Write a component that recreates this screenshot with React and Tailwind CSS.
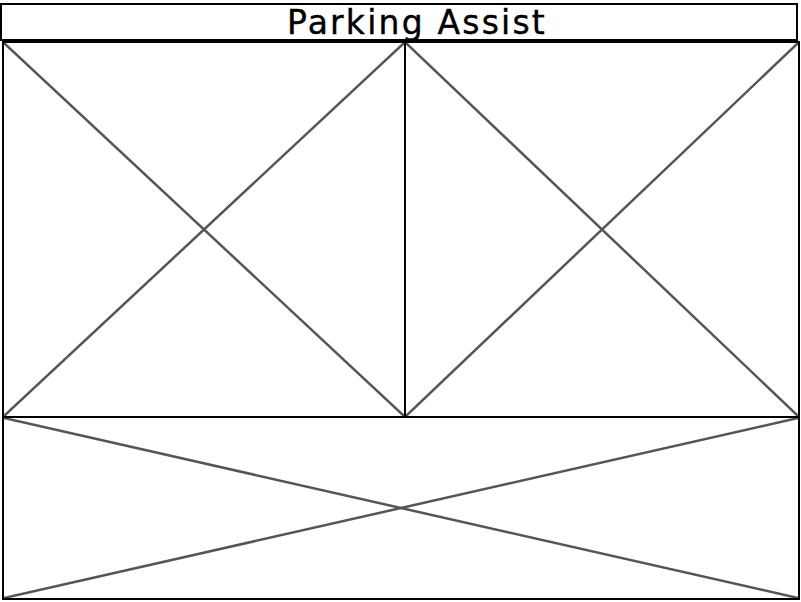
import React from "react";

const Placeholder = ({ className = "" }) => (
  <div className={`relative border-2 border-black bg-white ${className}`}>
    <svg className="absolute inset-0 h-full w-full" preserveAspectRatio="none">
      <line x1="0" y1="0" x2="100%" y2="100%" stroke="#555555" strokeWidth="2.5" />
      <line x1="100%" y1="0" x2="0" y2="100%" stroke="#555555" strokeWidth="2.5" />
    </svg>
  </div>
);

const App = () => {
  return (
    <div className="w-[801px] h-[602px] bg-white pt-[3px] overflow-hidden">
      <div
        className="w-[798px] h-[38px] border-2 border-black flex items-center justify-center pl-[36px] pt-[1px] text-[33px] leading-none tracking-[2.2px] text-black"
        style={{ fontFamily: '"DejaVu Sans", sans-serif', WebkitTextStroke: "0.4px black" }}
      >
        Parking Assist
      </div>
      <div className="ml-[2px] w-[798px] grid grid-cols-[404px_394px]">
        <Placeholder className="h-[377px]" />
        <Placeholder className="h-[377px] -ml-[2px] w-[396px]" />
      </div>
      <Placeholder className="ml-[2px] -mt-[2px] w-[798px] h-[184px]" />
    </div>
  );
};

export default App;
